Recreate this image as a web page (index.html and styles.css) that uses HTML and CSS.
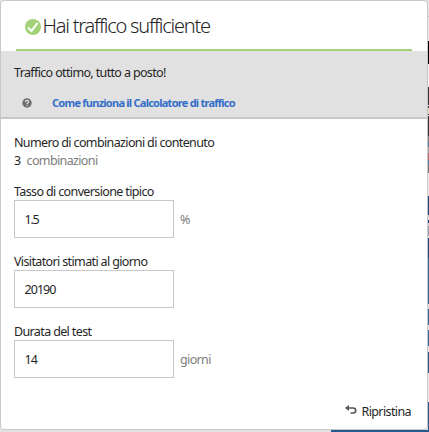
FILE: index.html
```
<!DOCTYPE html>
<html lang="it">
<head>
<meta charset="utf-8">
<title>Calcolatore di traffico</title>
<link rel="stylesheet" href="styles.css">
</head>
<body>
<main class="dialog">
  <header class="header">
    <svg class="check" viewBox="0 0 16 16"><circle cx="8" cy="8" r="8" fill="#a2d177"/><path d="M3 8.4 6.5 12 12.5 3.8" fill="none" stroke="#fff" stroke-width="2.1"/></svg>
    <h1 class="title">Hai traffico sufficiente</h1>
  </header>
  <section class="notice">
    <p class="status">Traffico ottimo, tutto a posto!</p>
    <div class="help">
      <svg class="help-icon" viewBox="0 0 10 10"><circle cx="5" cy="5" r="4.7" fill="#707070"/><path d="M3.5 3.9C3.5 1.9 6.7 2 6.5 3.9 6.4 4.8 5.1 4.8 5.1 6" fill="none" stroke="#e1e1e1" stroke-width="1.2"/><path d="M4.5 6.8h1.2v1.1H4.5z" fill="#e1e1e1"/></svg>
      <a class="link">Come funziona il Calcolatore di traffico</a>
    </div>
  </section>
  <form class="form">
    <div class="label">Numero di combinazioni di contenuto</div>
    <div class="count"><span>3</span><span class="unit">combinazioni</span></div>
    <div class="field">
      <div class="label">Tasso di conversione tipico</div>
      <div class="row"><div class="box tight">1.5</div><span class="unit">%</span></div>
    </div>
    <div class="field">
      <div class="label">Visitatori stimati al giorno</div>
      <div class="row"><div class="box">20190</div></div>
    </div>
    <div class="field">
      <div class="label">Durata del test</div>
      <div class="row"><div class="box">14</div><span class="unit">giorni</span></div>
    </div>
  </form>
  <footer class="footer">
    <svg class="undo" viewBox="0 0 12 10"><path d="M4 0v6L0 3z" fill="#555"/><path d="M3 3h5.2a2.4 2.4 0 0 1 0 5H5.5" fill="none" stroke="#555" stroke-width="1.6"/></svg>
    <span>Ripristina</span>
  </footer>
</main>
</body>
</html>
```
FILE: styles.css
```
* { box-sizing: border-box; }
html { height: 432px; overflow: hidden; }
body {
  margin: 0;
  width: 429px;
  height: 432px;
  overflow: hidden;
  font: 12.5px/18px "Noto Sans", sans-serif;
  color: #262626;
  background:
    linear-gradient(#235a90, #235a90) 331px 430px / 98px 2px no-repeat,
    linear-gradient(#e8e8e8 16px, #c4c4c4 16px 17px, #efefef 17px 41px, #000 41px 64px, #efefef 64px 87px, #333 87px 105px, #eee 105px 106px, #333 106px 108px, #d8d8b8 108px 114px, #333 114px 115px, #eee 115px 116px, #333 116px 136px, #808080 136px 141px, #5a7890 141px 147px, #aaa 147px 153px, #b86c6c 153px 160px, #507ca8 160px 165px, #777 165px 173px, #eee 173px 196px, #17497c 196px 215px, #ddd 215px 220px, #17497c 220px 223px, #ddd 223px 226px, #9ca5b5 226px 236px, #eee 236px 238px, #1b4a80 238px 258px, #2e6fa0 258px 304px, #e8e8e8 304px 309px, #2e6fa0 309px 325px, #e8e8e8 325px 330px, #2e6fa0 330px 346px, #e8e8e8 346px 352px, #235a90 352px 373px, #eee 373px 402px, #235a90 402px) 428px 0 / 1px 432px no-repeat,
    #e3e3e3;
}
.dialog {
  display: flex;
  flex-direction: column;
  width: 428px;
  height: 430px;
  border: 1px solid #c8c8c8;
  border-radius: 4px;
  background: #fff;
}
.header {
  display: flex;
  align-items: center;
  height: 50px;
  margin: 0 15px;
  padding-left: 9px;
  border-bottom: 2px solid #a2d177;
}
.check { width: 16px; height: 16px; margin: 4px 1.5px 0 0; }
.title {
  margin: 2px 0 0;
  font: 330 20px/28px "Noto Sans", sans-serif;
  letter-spacing: -1.23px;
  font-variant-ligatures: none;
  white-space: nowrap;
}
.notice {
  height: 68px;
  padding: 13px 13px 0;
  background: #e1e1e1;
  border-bottom: 2px solid #c8c8c8;
}
.status { margin: 0; letter-spacing: -0.64px; }
.help { display: flex; align-items: center; margin-top: 12px; padding-left: 8px; }
.help-icon { width: 10px; height: 10px; margin: -1px 20px 0 0; }
.link { font-size: 11px; font-weight: 700; color: #326ec8; letter-spacing: -0.75px; }
.form { padding: 15px 13px 0; letter-spacing: -0.63px; }
.count { display: flex; gap: 6px; margin-bottom: 13px; }
.unit { color: #7c7c7c; }
.field { height: 70px; }
.row { display: flex; align-items: center; gap: 6px; margin-top: -1px; }
.row .unit { margin-top: 2px; }
.box {
  width: 160px;
  height: 38px;
  padding-left: 9.5px;
  border: 1px solid #c8c8c8;
  line-height: 37px;
  letter-spacing: -0.95px;
}
.tight { letter-spacing: -1.2px; }
.footer { display: flex; align-items: center; margin: auto 16px 8px auto; letter-spacing: -0.6px; }
.undo { width: 12px; height: 10px; margin: -4px 4px 0 0; }
```
